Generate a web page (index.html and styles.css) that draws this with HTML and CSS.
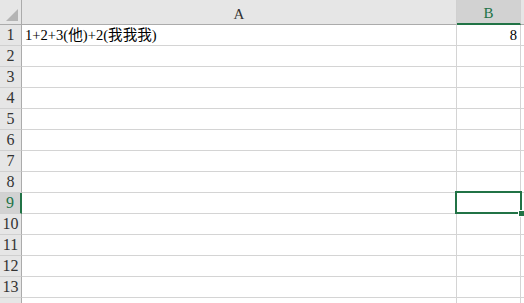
FILE: index.html
```html
<!DOCTYPE html>
<html lang="zh-Hant">
<head>
    <meta charset="UTF-8">
    <title>Sheet1</title>
    <link rel="stylesheet" href="styles.css">
</head>
<body>
    <div class="sheet">
        <!-- column headers -->
        <div class="row head-row">
            <div class="corner"><span class="select-all"></span></div>
            <div class="col-head">A</div>
            <div class="col-head active">B</div>
            <div class="col-head"></div>
        </div>
        <div class="row"><div class="row-head">1</div><div class="cell">1+2+3(他)+2(我我我)</div><div class="cell num">8</div><div class="cell"></div></div>
        <div class="row"><div class="row-head">2</div><div class="cell"></div><div class="cell"></div><div class="cell"></div></div>
        <div class="row"><div class="row-head">3</div><div class="cell"></div><div class="cell"></div><div class="cell"></div></div>
        <div class="row"><div class="row-head">4</div><div class="cell"></div><div class="cell"></div><div class="cell"></div></div>
        <div class="row"><div class="row-head">5</div><div class="cell"></div><div class="cell"></div><div class="cell"></div></div>
        <div class="row"><div class="row-head">6</div><div class="cell"></div><div class="cell"></div><div class="cell"></div></div>
        <div class="row"><div class="row-head">7</div><div class="cell"></div><div class="cell"></div><div class="cell"></div></div>
        <div class="row"><div class="row-head">8</div><div class="cell"></div><div class="cell"></div><div class="cell"></div></div>
        <div class="row"><div class="row-head active">9</div><div class="cell"></div><div class="cell"></div><div class="cell"></div></div>
        <div class="row"><div class="row-head">10</div><div class="cell"></div><div class="cell"></div><div class="cell"></div></div>
        <div class="row"><div class="row-head">11</div><div class="cell"></div><div class="cell"></div><div class="cell"></div></div>
        <div class="row"><div class="row-head">12</div><div class="cell"></div><div class="cell"></div><div class="cell"></div></div>
        <div class="row"><div class="row-head">13</div><div class="cell"></div><div class="cell"></div><div class="cell"></div></div>
        <div class="row"><div class="row-head"></div><div class="cell"></div><div class="cell"></div><div class="cell"></div></div>

        <!-- selected cell B9 -->
        <div class="selection"><span class="fill-handle"></span></div>
    </div>
</body>
</html>
```

FILE: styles.css
```css
body {
    margin: 0;
    background-color: #fff;
    font-family: "Liberation Serif", "Noto Sans CJK TC", serif;
    overflow: hidden;
}
.sheet {
    position: relative;
    width: 524px;
    height: 303px;
    overflow: hidden;
}
.row {
    display: grid;
    grid-template-columns: 22px 435px 64px 40px;
    height: 21px;
}
.head-row {
    height: 25px;
}
.corner,
.col-head,
.row-head {
    background-color: #e6e6e6;
    color: #333;
    border-right: 1px solid #ababab;
    border-bottom: 1px solid #ababab;
    display: flex;
    justify-content: center;
    align-items: center;
    font-size: 15px;
}
.corner {
    position: relative;
}
.select-all {
    position: absolute;
    right: 3px;
    bottom: 3px;
    width: 0;
    height: 0;
    border-left: 12px solid transparent;
    border-bottom: 12px solid #b4b4b4;
}
.col-head {
    padding-top: 4px;
    border-right-color: #d0d0d0;
}
.col-head.active {
    background-color: #d2d2d2;
    color: #217346;
    border-bottom: 2px solid #217346;
}
.row-head {
    border-bottom-color: #d0d0d0;
    font-size: 16px;
}
.row-head.active {
    background-color: #d2d2d2;
    color: #217346;
    border-right: 2px solid #217346;
}
.cell {
    border-right: 1px solid #d4d4d4;
    border-bottom: 1px solid #d4d4d4;
    font-size: 14.6px;
    line-height: 20px;
    padding: 0 3px;
    white-space: nowrap;
    color: #000;
}
.cell.num {
    text-align: right;
}
.selection {
    position: absolute;
    left: 455px;
    top: 191px;
    width: 63px;
    height: 19px;
    border: 2px solid #217346;
}
.fill-handle {
    position: absolute;
    right: -5px;
    bottom: -5px;
    width: 5px;
    height: 5px;
    background-color: #217346;
    border: 1px solid #fff;
}
```
